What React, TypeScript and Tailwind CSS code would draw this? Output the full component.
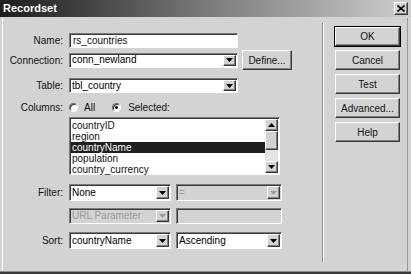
import { ReactNode } from "react";

const sunken =
  "border border-t-[#7a7a7a] border-l-[#7a7a7a] border-b-white border-r-white shadow-[inset_1px_1px_0_#3a3a3a]";
const raised =
  "border border-t-white border-l-white border-b-[#3a3a3a] border-r-[#3a3a3a] shadow-[inset_-1px_-1px_0_#808080]";

const Arrow = ({ dir = "down", disabled = false }: { dir?: "up" | "down"; disabled?: boolean }) => (
  <svg width="7" height="4" viewBox="0 0 7 4">
    <path
      d={dir === "down" ? "M0 0h7L3.5 4z" : "M0 4h7L3.5 0z"}
      fill={disabled ? "#9a9a9a" : "#000"}
    />
  </svg>
);

const ArrowBtn = ({ dir = "down", disabled = false }: { dir?: "up" | "down"; disabled?: boolean }) => (
  <div className={`w-[13px] h-full bg-[#d3d3d3] flex items-center justify-center ${raised}`}>
    <Arrow dir={dir} disabled={disabled} />
  </div>
);

const Select = ({
  value,
  width,
  height = 15,
  disabled = false,
}: {
  value: string;
  width: string;
  height?: number;
  disabled?: boolean;
}) => (
  <div
    className={`${width} flex items-stretch p-[1px] pl-[2px] ${sunken} ${
      disabled ? "bg-[#d3d3d3] text-[#9a9a9a]" : "bg-white text-black"
    }`}
    style={{ height }}
  >
    <span className="flex-1 leading-none flex items-center truncate">{value}</span>
    <ArrowBtn disabled={disabled} />
  </div>
);

const Label = ({ children }: { children: ReactNode }) => (
  <span className="w-[60px] text-right pr-[1px] shrink-0">{children}</span>
);

const Button = ({ children, def = false, className = "" }: { children: ReactNode; def?: boolean; className?: string }) => (
  <div
    className={`flex items-center justify-center bg-[#d3d3d3] ${
      def ? "outline outline-1 outline-black" : ""
    } ${raised} ${className}`}
  >
    {children}
  </div>
);

const Radio = ({ checked }: { checked: boolean }) => (
  <span className="w-[9px] h-[9px] rounded-full bg-white border border-t-[#6a6a6a] border-l-[#6a6a6a] border-b-white border-r-white flex items-center justify-center shadow-[inset_1px_1px_0_#3a3a3a]">
    {checked && <span className="w-[3px] h-[3px] rounded-full bg-black" />}
  </span>
);

const columns = ["countryID", "region", "countryName", "population", "country_currency"];

export default function App() {
  return (
    <div
      className="w-[411px] h-[274px] bg-[#d3d3d3] flex flex-col overflow-hidden text-[10px] text-[#111]"
      style={{ fontFamily: '"Liberation Sans", Arial, sans-serif' }}
    >
      {/* title bar */}
      <div className="h-[17px] shrink-0 flex items-center justify-between pl-[3px] pr-[3px] bg-gradient-to-r from-[#1e1e1e] via-[#7a7a7a] to-[#cfcfcf]">
        <span className="text-white font-bold text-[11px] leading-none">Recordset</span>
        <div className={`w-[14px] h-[13px] bg-[#d3d3d3] flex items-center justify-center ${raised}`}>
          <svg width="8" height="7" viewBox="0 0 8 7">
            <path d="M0.5 0.5L7.5 6.5M7.5 0.5L0.5 6.5" stroke="#000" strokeWidth="1.6" />
          </svg>
        </div>
      </div>

      <div className="flex-1 flex border-l border-l-white border-r border-r-[#9a9a9a] ml-[2px] mr-[3px] mt-[1px]">
        {/* form */}
        <div className="w-[319px] shrink-0 flex flex-col">
          <div className="flex items-center gap-[5px] mt-[15px] ml-[1px]">
            <Label>Name:</Label>
            <div className={`w-[169px] h-[15px] bg-white pl-[3px] flex items-center leading-none ${sunken}`}>
              rs_countries
            </div>
          </div>

          <div className="flex items-center gap-[5px] mt-[2px] ml-[1px] h-[20px]">
            <Label>Connection:</Label>
            <Select value="conn_newland" width="w-[169px]" />
            <Button className="w-[50px] h-[20px] ml-[-1px]">Define...</Button>
          </div>

          <div className="flex items-center gap-[5px] mt-[8px] ml-[1px]">
            <Label>Table:</Label>
            <Select value="tbl_country" width="w-[169px]" />
          </div>

          <div className="flex items-center gap-[5px] mt-[8px] ml-[1px] h-[12px]">
            <Label>Columns:</Label>
            <div className="flex items-center">
              <Radio checked={false} />
              <span className="ml-[6px]">All</span>
              <span className="ml-[17px]">
                <Radio checked />
              </span>
              <span className="ml-[7px]">Selected:</span>
            </div>
          </div>

          <div className="flex mt-[4px] ml-[66px]">
            <div className={`w-[211px] h-[58px] bg-white flex p-[1px] ${sunken}`}>
              <div className="flex-1 pt-[1px] flex flex-col">
                {columns.map((c) => (
                  <div
                    key={c}
                    className={`h-[11px] leading-[11px] pl-[1px] ${
                      c === "countryName" ? "bg-[#1e1e1e] text-white" : ""
                    }`}
                  >
                    {c}
                  </div>
                ))}
              </div>
              <div className="w-[13px] flex flex-col bg-[#e4e4e4]">
                <div className="h-[12px]">
                  <ArrowBtn dir="up" />
                </div>
                <div className={`h-[19px] bg-[#d3d3d3] ${raised}`} />
                <div className="flex-1" />
                <div className="h-[12px]">
                  <ArrowBtn />
                </div>
              </div>
            </div>
          </div>

          <div className="flex items-center gap-[5px] mt-[9px] ml-[1px]">
            <Label>Filter:</Label>
            <Select value="None" width="w-[102px]" height={17} />
            <Select value="=" width="w-[106px]" height={17} disabled />
          </div>

          <div className="flex items-center gap-[5px] mt-[7px] ml-[1px]">
            <span className="w-[60px] shrink-0" />
            <Select value="URL Parameter" width="w-[102px]" height={16} disabled />
            <div className={`w-[106px] h-[16px] bg-[#d3d3d3] ${sunken}`} />
          </div>

          <div className="flex items-center gap-[5px] mt-[8px] ml-[1px]">
            <Label>Sort:</Label>
            <Select value="countryName" width="w-[102px]" height={17} />
            <Select value="Ascending" width="w-[106px]" height={17} />
          </div>
        </div>

        {/* separator */}
        <div className="w-[2px] mt-[5px] mb-[9px] border-l border-l-[#8a8a8a] border-r border-r-white" />

        {/* buttons */}
        <div className="flex flex-col gap-[4px] ml-[11px] mt-[9px]">
          <Button def className="w-[65px] h-[19px]">OK</Button>
          <Button className="w-[65px] h-[20px]">Cancel</Button>
          <Button className="w-[65px] h-[20px]">Test</Button>
          <Button className="w-[65px] h-[20px]">Advanced...</Button>
          <Button className="w-[65px] h-[20px]">Help</Button>
        </div>
      </div>

      <div className="h-[3px] shrink-0 bg-[#3a3a3a] border-t border-t-[#8a8a8a]" />
    </div>
  );
}
